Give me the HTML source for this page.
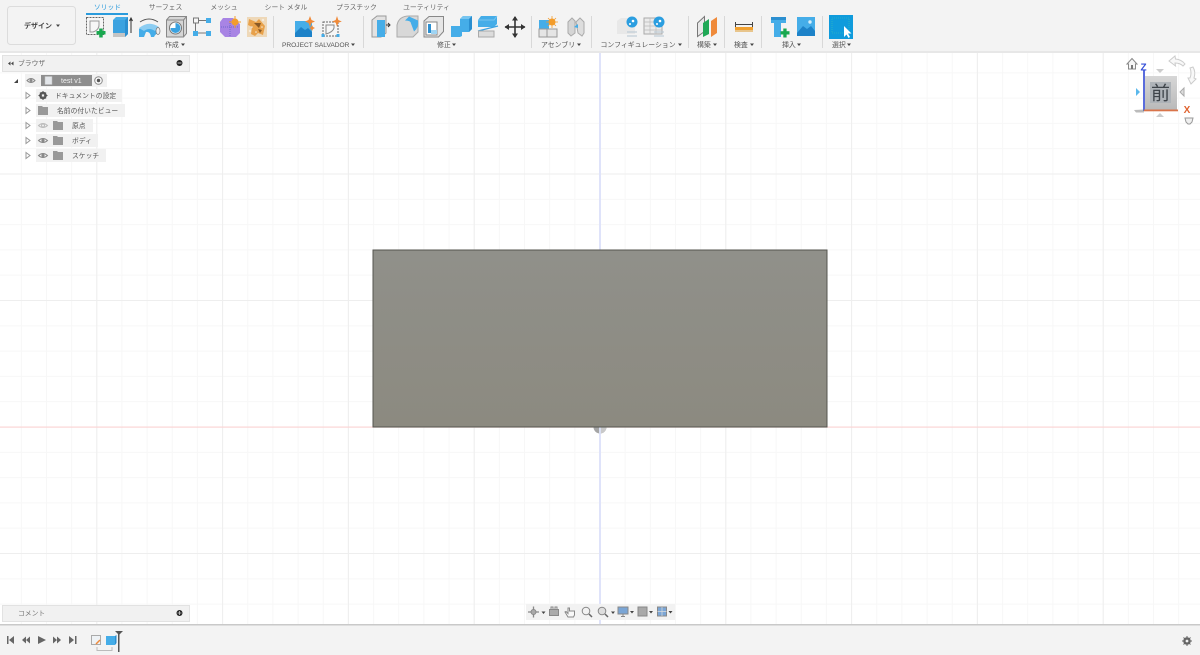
<!DOCTYPE html>
<html lang="ja">
<head>
<meta charset="utf-8">
<title>Design</title>
<style>
html,body{margin:0;padding:0;width:1200px;height:655px;overflow:hidden;background:#fff}
svg{display:block;position:absolute;left:0;top:0;filter:blur(.3px)}
text{font-family:"Liberation Sans","Noto Sans CJK JP",sans-serif;fill:#555;font-size:6.9px}
.tab{text-anchor:middle;fill:#666;font-size:6.8px}
.lab{fill:#555;font-size:6.9px}
.tree{fill:#555;font-size:6.8px}
.b{fill:#45ade8}
.d{fill:#2b8fd0}
.l{fill:#9fd4f3}
</style>
</head>
<body>
<svg width="1200" height="655" viewBox="0 0 1200 655" xmlns="http://www.w3.org/2000/svg">
<defs>
<pattern id="vm" patternUnits="userSpaceOnUse" x="599.5" y="0" width="25.16" height="655"><rect width="1" height="655" fill="#f7f7f7"/></pattern>
<pattern id="hm" patternUnits="userSpaceOnUse" x="0" y="426.5" width="1200" height="25.3"><rect width="1200" height="1" fill="#f7f7f7"/></pattern>
<pattern id="vM" patternUnits="userSpaceOnUse" x="599.5" y="0" width="125.8" height="655"><rect width="1" height="655" fill="#eeeeee"/></pattern>
<pattern id="hM" patternUnits="userSpaceOnUse" x="0" y="426.5" width="1200" height="126.5"><rect width="1200" height="1" fill="#eeeeee"/></pattern>
<linearGradient id="body" x1="0" y1="0" x2="0" y2="1"><stop offset="0" stop-color="#90908a"/><stop offset="1" stop-color="#8c8a80"/></linearGradient>
<linearGradient id="cube" x1="0" y1="0" x2="0" y2="1"><stop offset="0" stop-color="#d6d6d6"/><stop offset="1" stop-color="#b9b9b9"/></linearGradient>
</defs>

<!-- viewport grid -->
<rect y="53" width="1200" height="572" fill="#fff"/>
<rect y="53" width="1200" height="572" fill="url(#vm)"/>
<rect y="53" width="1200" height="572" fill="url(#hm)"/>
<rect y="53" width="1200" height="572" fill="url(#vM)"/>
<rect y="53" width="1200" height="572" fill="url(#hM)"/>
<rect x="599" y="53" width="2" height="572" fill="#dfe3fa"/>
<rect y="426.5" width="1200" height="1.2" fill="#fbd5d5"/>

<!-- body -->
<circle cx="600" cy="427" r="6.500" fill="#a5a5a5"/>
<path d="M600 427h6.500a6.500 6.500 0 0 1-6.500 6.500z" fill="#c9c9c9"/>
<rect x="599" y="427" width="2" height="7" fill="#d9dff2"/>
<rect x="373" y="250" width="454" height="177" fill="url(#body)" stroke="#55554f" stroke-width="1"/>

<!-- top toolbar -->
<rect width="1200" height="51" fill="#f3f3f3"/>
<rect y="51" width="1200" height="2" fill="#e7e7e7"/>
<rect x="7.500" y="6.500" width="68" height="38" rx="3" fill="#f3f3f3" stroke="#dcdcdc"/>
<text x="38" y="28" text-anchor="middle" style="font-size:7px;font-weight:700;fill:#444">デザイン</text>
<path d="M56 24.500h4l-2 2.500z" fill="#444"/>

<text class="tab" x="107.500" y="9.500" style="fill:#2a9bdc">ソリッド</text>
<text class="tab" x="165.500" y="9.500">サーフェス</text>
<text class="tab" x="224" y="9.500">メッシュ</text>
<text class="tab" x="286" y="9.500">シート メタル</text>
<text class="tab" x="356.500" y="9.500">プラスチック</text>
<text class="tab" x="426.500" y="9.500">ユーティリティ</text>
<rect x="86" y="13" width="42" height="2" fill="#2a9bdc"/>

<g fill="#d8d8d8">
<rect x="273" y="16" width="1" height="32"/><rect x="363" y="16" width="1" height="32"/>
<rect x="531" y="16" width="1" height="32"/><rect x="591" y="16" width="1" height="32"/>
<rect x="688" y="16" width="1" height="32"/><rect x="724" y="16" width="1" height="32"/>
<rect x="761" y="16" width="1" height="32"/><rect x="822" y="16" width="1" height="32"/>
</g>

<text class="lab" x="165" y="47">作成</text><path d="M181 43.500h4l-2 2.500z" fill="#444"/>
<text class="lab" x="282" y="47" style="font-size:6.600px">PROJECT SALVADOR</text><path d="M351 43.500h4l-2 2.500z" fill="#444"/>
<text class="lab" x="437" y="47">修正</text><path d="M452 43.500h4l-2 2.500z" fill="#444"/>
<text class="lab" x="541" y="47">アセンブリ</text><path d="M577 43.500h4l-2 2.500z" fill="#444"/>
<text class="lab" x="600.500" y="47">コンフィギュレーション</text><path d="M678 43.500h4l-2 2.500z" fill="#444"/>
<text class="lab" x="697" y="47">構築</text><path d="M713 43.500h4l-2 2.500z" fill="#444"/>
<text class="lab" x="734" y="47">検査</text><path d="M750 43.500h4l-2 2.500z" fill="#444"/>
<text class="lab" x="782" y="47">挿入</text><path d="M797 43.500h4l-2 2.500z" fill="#444"/>
<text class="lab" x="832" y="47">選択</text><path d="M847 43.500h4l-2 2.500z" fill="#444"/>

<!-- create sketch -->
<g>
<rect x="86.500" y="17.500" width="17" height="17" fill="#f6f6f6" stroke="#666" stroke-dasharray="2 1"/>
<path d="M90 21h9v4q0 5-6 7h-3z" fill="none" stroke="#999"/>
<rect x="96.500" y="31" width="9" height="3.500" fill="#18a84f"/><rect x="99.200" y="28.500" width="3.500" height="9" fill="#18a84f"/>
</g>
<!-- box -->
<path d="M113 20l3-3h12v17l-3 3h-12z" fill="#45ade8"/><path d="M113 20h12v14h-12z" fill="#3ba2e0"/><path d="M125 20l3-3v17l-3 3z" fill="#2b8fd0"/>
<path d="M113 33h12v4h-12z" fill="#c4c4c4"/>
<path d="M131 33v-14M129.500 21l1.500-3 1.500 3" fill="none" stroke="#333"/>
<!-- revolve -->
<path d="M139 29q10-8 20-1v5q-3 0-5 4h-3q-1-6-5-5l-2 5h-5z" fill="#45ade8"/>
<path d="M139 28q10-8 20-1l-4 4q-6-4-11 0z" fill="#8ccdf2"/>
<path d="M140 22q9-6 18 0" fill="none" stroke="#555"/>
<ellipse cx="158" cy="31" rx="2" ry="3.500" fill="#eee" stroke="#777" stroke-width=".7"/>
<!-- hole -->
<path d="M166.500 20l3-3.500h17v17l-3 3.500h-17z" fill="#d6d6d6" stroke="#888"/>
<path d="M166.500 20h17v17M183.500 20l3-3.500" fill="none" stroke="#888"/>
<circle cx="175.500" cy="28" r="6" fill="#fff" stroke="#777"/><path d="M175.500 28v-5a5 5 0 1 1-5 5z" fill="#3ba2e0"/>
<!-- pattern -->
<path d="M196 20.500h11M196 33h11M195.500 21v11" stroke="#777" fill="none"/>
<rect x="193.500" y="18" width="5" height="5" fill="#f6f6f6" stroke="#777"/>
<rect x="206" y="18" width="5" height="5" class="b"/><rect x="193" y="31" width="5" height="5" class="b"/><rect x="206" y="31" width="5" height="5" class="b"/>
<!-- purple -->
<path d="M223 18h10l7 6v9l-4 4h-11l-5-5v-10z" fill="#a884e4"/>
<path d="M221 27h17M230 21v15" stroke="#6f66cc" stroke-dasharray="1 1" fill="none"/>
<circle cx="235" cy="22" r="3.500" fill="#f39c2b"/><path d="M235 16v12M229 22h12" stroke="#f39c2b"/>
<!-- speckled orange -->
<rect x="247" y="17" width="20" height="20" fill="#eed8b8"/>
<path d="M249 19l7 3 3-3 6 7-2 9-5-2-3 3-4-2 1-7-4-2z" fill="#e8a14a"/>
<path d="M254 23l5 5 2-5zM258 29l2 4 2-3z" fill="#8a5a26"/>
<g fill="#f6ecdc"><circle cx="250" cy="31" r="1.200"/><circle cx="263" cy="20" r="1.200"/><circle cx="252" cy="27" r=".8"/><circle cx="262" cy="27" r=".8"/><circle cx="256" cy="32" r=".8"/></g>

<!-- salvador 1 -->
<rect x="295" y="21" width="17" height="16" class="b"/>
<path d="M295 33l6-6 4 3 3-2 4 4v5h-17z" fill="#1d82c8"/>
<path d="M310 16l1.500 4 3.500 1.500-3.500 1.500-1.500 4-1.500-4-3.500-1.500 3.500-1.500z" fill="#ef8a3a"/>
<path d="M312 25l1 2 2 1-2 1-1 2-1-2-2-1 2-1z" fill="#ef8a3a"/>
<!-- salvador 2 -->
<rect x="323" y="22" width="15" height="14" fill="#f7f7f7" stroke="#666" stroke-dasharray="2 1"/>
<path d="M326 25h8v3q-1 4-8 6z" fill="none" stroke="#888"/>
<rect x="321.500" y="34" width="3" height="3" class="b"/><rect x="336.500" y="34" width="3" height="3" class="b"/>
<path d="M337 16l1.300 4 3.500 1.500-3.500 1.300-1.300 4-1.300-4-3.500-1.300 3.500-1.500z" fill="#ef8a3a"/>

<!-- press pull -->
<path d="M372 20l5-4h9v17l-5 4h-9z" fill="#e2e2e2" stroke="#999"/>
<path d="M377 20h8v17h-8z" class="b"/>
<path d="M386 25h3M388 23l2 2-2 2" stroke="#333" fill="none"/>
<!-- fillet -->
<path d="M397 25q2-9 12-9l9 0v16l-5 5h-16z" fill="#d8d8d8" stroke="#aaa"/>
<path d="M409 16.500l9 4q1 7-4 11l-3-8q0-3-6-3z" class="b"/>
<!-- shell -->
<path d="M424 21l5-4.500h14.500v15l-5 5.500h-14.500z" fill="#e6e6e6" stroke="#888"/>
<rect x="426" y="22" width="11" height="13" fill="#fff" stroke="#888"/>
<path d="M428 24h3v6h5v3h-8z" class="d"/><rect x="431" y="30" width="6" height="4" class="l"/>
<!-- combine -->
<path d="M451 26h9v-7l3-3h9v13l-3 3h-7v4l-2 1h-9z" class="b"/>
<path d="M460 19l3-3h9l-3 3z" fill="#77c5f0"/><path d="M469 19l3-3v13l-3 3z" fill="#2b8fd0"/>
<!-- split -->
<path d="M478 20l3-4h16v8l-3 3h-16z" class="b"/><path d="M478 20h16l3-4" fill="none" stroke="#77c5f0"/>
<path d="M478 31l20-5" stroke="#3ba2e0" stroke-width="1.200"/>
<path d="M478.500 31h15.500v6h-15.500z" fill="#dcdcdc" stroke="#aaa"/>
<!-- move -->
<path d="M515 17v20M505 27h20" stroke="#333" stroke-width="1.600"/>
<path d="M515 16l-3 4.500h6zM515 38l-3-4.500h6zM504.500 27l4.500-3v6zM525.500 27l-4.500-3v6z" fill="#333"/>

<!-- assembly -->
<rect x="539" y="20" width="10" height="9" class="b"/>
<rect x="539" y="29" width="8" height="8" fill="#e5e5e5" stroke="#999"/><rect x="547" y="29" width="10" height="8" fill="#e5e5e5" stroke="#999"/>
<circle cx="552" cy="22" r="3.500" fill="#f39c2b"/><path d="M552 16v12M546 22h12M548 18l8 8M556 18l-8 8" stroke="#f39c2b" stroke-width=".8"/>
<!-- joint -->
<path d="M568 22l4-4 3 3v12l-4 3-3-3z" fill="#d5d5d5" stroke="#aaa"/>
<path d="M576 22l4-4 4 4v11l-2 3-4-3z" fill="#ddd" stroke="#aaa"/><path d="M574 27l4-3v4z" class="b"/>

<!-- configurations -->
<path d="M617 21l4-3h14v16h-18z" fill="#e8e8e8"/>
<circle cx="632" cy="22" r="5.500" fill="#2b9ee0"/><circle cx="633" cy="21" r="1.300" fill="#fff"/><circle cx="630" cy="24" r="1" fill="#fff"/>
<path d="M627 32h10M627 36h10" stroke="#b6c6d2"/>
<rect x="644" y="18" width="18" height="16" fill="#ebebeb" stroke="#aaa"/>
<path d="M644 22h18M650 18v16M656 18v16M644 26h18M644 30h18" stroke="#bbb" stroke-width=".7"/>
<circle cx="659" cy="22" r="5.500" fill="#2b9ee0"/><circle cx="660" cy="21" r="1.300" fill="#fff"/><circle cx="657" cy="24" r="1" fill="#fff"/>
<path d="M654 32h10M654 36h10" stroke="#b6c6d2"/>

<!-- construct -->
<path d="M697.500 23l7-6.500v15l-7 5z" fill="#e8e8e8" stroke="#777"/>
<path d="M703 23l6-4v15l-6 3z" fill="#1fa856"/>
<path d="M711 21l6-4v16l-6 4z" fill="#ef8a3a"/>
<!-- inspect -->
<path d="M735.500 22v5M752.500 22v5M736 24.500h16" stroke="#444" fill="none"/>
<rect x="735" y="27" width="18" height="3" fill="#f0a030"/><rect x="735" y="30" width="18" height="2" fill="#e8c58c"/>
<!-- insert -->
<path d="M771 17h15v6h-5v14h-7v-14h-3z" class="b"/>
<rect x="771" y="17" width="15" height="3" class="d"/>
<rect x="780.500" y="31.200" width="9" height="3.300" fill="#18a84f"/><rect x="783.300" y="28.500" width="3.300" height="9" fill="#18a84f"/>
<rect x="797" y="17" width="18" height="19" class="b"/>
<path d="M797 33l6-7 4 3 4-3 4 5v5h-18z" fill="#1d82c8"/><circle cx="810" cy="22" r="1.700" fill="#d6effb"/>
<!-- select -->
<rect x="829" y="15" width="24" height="24" fill="#0f9bdc"/>
<rect x="832" y="18" width="17" height="15" fill="none" stroke="#3cc1b5" stroke-width=".6" stroke-dasharray="1 1"/>
<path d="M844 26v11l2.500-2.500 2 3.500 1.500-1-2-3.500h3.500z" fill="#fff"/>

<!-- browser panel -->
<rect x="2.500" y="55.500" width="187" height="16" fill="#f1f1f1" stroke="#e2e2e2"/>
<path d="M8 63.500l2.500-2v4zM11 63.500l2.500-2v4z" fill="#444"/>
<text x="18" y="65.500" style="font-size:6.800px;fill:#666">ブラウザ</text>
<circle cx="179.500" cy="63" r="3" fill="#222"/><rect x="177.500" y="62.500" width="4" height="1" fill="#bbb"/>

<path d="M14 83l4-4v4z" fill="#444"/>
<rect x="25" y="74" width="82" height="13" fill="#f1f1f1"/>
<path d="M27 80.500q4-4 8 0q-4 4-8 0z" fill="none" stroke="#888"/><circle cx="31" cy="80.500" r="1.500" fill="#888"/>
<rect x="41" y="75" width="51" height="11" fill="#8e8e8e"/>
<rect x="45" y="76.500" width="7" height="8" fill="#e3e6ea" stroke="#bbb" stroke-width=".5"/>
<text x="61" y="83" style="font-size:7px;fill:#f2f2f2">test v1</text>
<circle cx="98.500" cy="80.500" r="3.800" fill="#fafafa" stroke="#888"/><circle cx="98.500" cy="80.500" r="1.700" fill="#555"/>

<g fill="none" stroke="#999"><path d="M26 92.500l4 3-4 3zM26 107.500l4 3-4 3zM26 122.500l4 3-4 3zM26 137.500l4 3-4 3zM26 152.500l4 3-4 3z"/></g>
<rect x="36" y="89" width="86" height="13" fill="#f1f1f1"/>
<rect x="36" y="104" width="89" height="13" fill="#f1f1f1"/>
<rect x="36" y="119" width="57" height="13" fill="#f1f1f1"/>
<rect x="36" y="134" width="62" height="13" fill="#f1f1f1"/>
<rect x="36" y="149" width="70" height="13" fill="#f1f1f1"/>
<circle cx="43" cy="95.500" r="2.800" fill="none" stroke="#555" stroke-width="2"/>
<path d="M43 91v9M38.500 95.500h9M40 92.500l6 6M46 92.500l-6 6" stroke="#555"/><circle cx="43" cy="95.500" r="1.200" fill="#f1f1f1"/>
<path d="M38 106h4l1 1h5v8h-10z" fill="#999"/>
<path d="M53 121h4l1 1h5v8h-10z" fill="#999"/>
<path d="M53 136h4l1 1h5v8h-10z" fill="#999"/>
<path d="M53 151h4l1 1h5v8h-10z" fill="#999"/>
<path d="M38.500 125.500q4.500-4 9 0q-4.500 4-9 0z" fill="none" stroke="#bbb"/><circle cx="43" cy="125.500" r="1.500" fill="none" stroke="#bbb"/>
<path d="M38.500 140.500q4.500-4 9 0q-4.500 4-9 0z" fill="none" stroke="#888"/><circle cx="43" cy="140.500" r="1.600" fill="#888"/>
<path d="M38.500 155.500q4.500-4 9 0q-4.500 4-9 0z" fill="none" stroke="#888"/><circle cx="43" cy="155.500" r="1.600" fill="#888"/>
<text class="tree" x="55" y="98">ドキュメントの設定</text>
<text class="tree" x="57" y="113">名前の付いたビュー</text>
<text class="tree" x="72" y="128">原点</text>
<text class="tree" x="72" y="143">ボディ</text>
<text class="tree" x="72" y="158">スケッチ</text>

<!-- comment panel -->
<rect x="2.500" y="605.500" width="187" height="16" fill="#f1f1f1" stroke="#e2e2e2"/>
<text x="18" y="615.500" style="font-size:6.800px;fill:#777">コメント</text>
<circle cx="179.500" cy="613" r="3" fill="#222"/><path d="M177.500 613h4M179.500 611v4" stroke="#ccc" stroke-width=".8"/>

<!-- view cube -->
<path d="M1127 64l5-5.500 5 5.500h-1.500v5h-7v-5z" fill="#f6f6f6" stroke="#888"/><rect x="1131" y="65" width="2" height="4" fill="#777"/>
<path d="M1169 61l6-5 .5 3q6 .5 9.500 5l-2 2q-3-3-8-3l.5 3z" fill="#f8f8f8" stroke="#ccc"/>
<path d="M1190 68l3-1q3 5 1 11l2 1-5 5-3-6 2 0q2-5 0-10z" fill="#f8f8f8" stroke="#ccc"/>
<path d="M1156 69h8l-4 4z" fill="#ccc"/>
<path d="M1156 117h8l-4-4z" fill="#ccc"/>
<path d="M1136 88v8l4-4z" fill="#5ab8ec"/>
<path d="M1184 88v8l-4-4z" fill="#ddd" stroke="#aaa"/>
<path d="M1185 118h8l-1 4-2 2h-2l-2-2z" fill="#f0f0f0" stroke="#999"/>
<rect x="1144" y="76" width="33" height="34" fill="url(#cube)"/>
<rect x="1150" y="82" width="21" height="21" fill="#aeb3b8"/>
<text x="1160.500" y="99.500" text-anchor="middle" style="font-size:19px;fill:#3e444a">前</text>
<rect x="1143" y="70" width="2" height="41" fill="#5a6cdc"/>
<text x="1143.500" y="70.500" text-anchor="middle" style="font-size:10px;fill:#3650d8;font-weight:700">Z</text>
<path d="M1134 110l10-.5v3h-8z" fill="#777" opacity=".5"/>
<rect x="1144" y="109.500" width="34" height="1.800" fill="#d9744a"/>
<text x="1187" y="113" text-anchor="middle" style="font-size:10px;fill:#e0622e;font-weight:700">X</text>

<!-- nav bar -->
<rect x="526" y="604" width="149" height="16" fill="#f2f2f2"/>
<g fill="#888" stroke="#888">
<path d="M528 612h11M533.500 606.500v11" stroke-width="1.300" fill="none"/><circle cx="533.500" cy="612" r="2.500" fill="#aaa"/>
<path d="M541.500 611.500h4l-2 2.500z" stroke="none" fill="#444"/>
<rect x="549.500" y="609.500" width="9" height="6" fill="#aaa"/><path d="M551 609v-2h2v2M555 609v-2h2v2" fill="none"/>
<path d="M568 617l-3-5 1-.5 2 2v-5.500h1.500v3h5v4l-1 2z" fill="#f8f8f8"/>
<circle cx="586" cy="611" r="3.800" fill="none"/><path d="M589 614l3 3" stroke="#666" stroke-width="1.500"/>
<circle cx="602" cy="611" r="3.800" fill="#ddd"/><path d="M605 614l3 3" stroke="#666" stroke-width="1.500"/>
<path d="M611 611.500h4l-2 2.500z" stroke="none" fill="#444"/>
<rect x="618" y="607" width="10" height="7" fill="#7ba6d6"/><path d="M621 616.500h4M623 614v2" fill="none"/>
<path d="M630 611h4l-2 2.500z" stroke="none" fill="#444"/>
<rect x="638" y="607" width="9" height="9" fill="#a9a9a9"/>
<path d="M649 611h4l-2 2.500z" stroke="none" fill="#444"/>
<rect x="657.500" y="607" width="9" height="9" fill="#7ba6d6"/><path d="M657.500 611.500h9M662 607v9" stroke="#ddd" stroke-width=".7" fill="none"/>
<path d="M668.500 611h4l-2 2.500z" stroke="none" fill="#444"/>
</g>

<!-- timeline -->
<rect y="625" width="1200" height="30" fill="#f3f3f3"/>
<rect y="624" width="1200" height="1.500" fill="#c9c9c9"/>
<g fill="#666">
<rect x="7" y="636" width="1.500" height="8"/><path d="M14 636v8l-5-4z"/>
<path d="M22 640l4-3.500v7zM26 640l4-3.500v7z"/>
<path d="M38 636l8 4-8 4z"/>
<path d="M53 636.500l4 3.500-4 3.500zM57 636.500l4 3.500-4 3.500z"/>
<path d="M69 636l5 4-5 4z"/><rect x="75" y="636" width="1.500" height="8"/>
</g>
<rect x="91.500" y="635.500" width="9" height="9" fill="#eef2f5" stroke="#aaa"/>
<path d="M96 644l4-4" stroke="#ef8a3a" stroke-width="1.500"/>
<rect x="106" y="636" width="9" height="9" fill="#45ade8"/><path d="M115 636l1.500-1v8l-1.500 2z" fill="#2b8fd0"/>
<path d="M97 647v3.500h15v-3.500" fill="none" stroke="#bbb"/>
<path d="M115 631h8l-4 4z" fill="#555"/><rect x="118" y="633" width="1.500" height="19" fill="#555"/>
<circle cx="1187" cy="641" r="2.800" fill="none" stroke="#666" stroke-width="2"/>
<path d="M1187 636v10M1182 641h10M1183.500 637.500l7 7M1190.500 637.500l-7 7" stroke="#666"/><circle cx="1187" cy="641" r="1.300" fill="#f3f3f3"/>
</svg>
</body>
</html>
